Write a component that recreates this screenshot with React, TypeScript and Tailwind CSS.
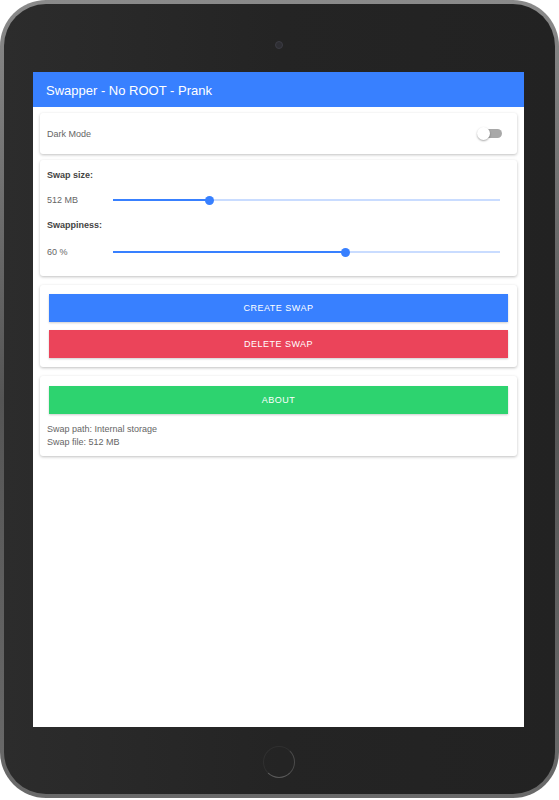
import { useState } from 'react';

function Slider({ value }: { value: number }) {
  return (
    <div className="relative flex-1 h-[10px] flex items-center">
      <div className="w-full h-[2px] bg-[#c9dcff]" />
      <div
        className="absolute left-0 h-[2px] bg-[#3880ff]"
        style={{ width: `${value * 100}%` }}
      />
      <div
        className="absolute w-[9px] h-[9px] -ml-[4.5px] rounded-full bg-[#3880ff]"
        style={{ left: `${value * 100}%` }}
      />
    </div>
  );
}

function Card({ children, className = '' }: { children: React.ReactNode; className?: string }) {
  return (
    <div
      className={`mx-[7px] bg-white rounded-[3px] shadow-[0_1px_3px_rgba(0,0,0,0.25)] ${className}`}
    >
      {children}
    </div>
  );
}

export default function App() {
  const [dark, setDark] = useState(false);
  return (
    <div className="w-[559px] h-[800px] bg-white font-['Liberation_Sans',Arial,sans-serif]">
      {/* Tablet bezel */}
      <div className="w-[559px] h-[798px] rounded-[46px] bg-gradient-to-b from-[#8a8a8a] via-[#555] to-[#6a6a6a] p-[4px]">
        <div className="w-full h-full rounded-[42px] bg-gradient-to-r from-[#2c2c2c] via-[#242424] to-[#222] flex flex-col pl-[29px] pr-[31px]">
          {/* Camera */}
          <div className="h-[68px] flex justify-center pt-[37px]">
            <div className="w-[8px] h-[8px] rounded-full bg-[#2e2e33] border border-[#3c3c44]" />
          </div>

          {/* Screen */}
          <div className="h-[655px] bg-white flex flex-col">
            <div className="h-[35px] bg-[#3880ff] flex items-center px-[13px] pt-[2px] text-white text-[13px]">
              Swapper - No ROOT - Prank
            </div>

            <div className="flex flex-col gap-[6px] pt-[6px]">
              <Card className="h-[41px] flex items-center justify-between pl-[7px] pr-[15px]">
                <span className="pt-[2px] text-[9px] text-[#666]">Dark Mode</span>
                <button
                  onClick={() => setDark(!dark)}
                  className="relative w-[18px] h-[9px] rounded-full bg-[#a8a8a8]"
                >
                  <span className="absolute -left-[7px] -top-[2px] w-[13px] h-[13px] rounded-full bg-white shadow-[0_1px_2px_rgba(0,0,0,0.35)]" />
                </button>
              </Card>

              <Card className="h-[116px] pl-[7px] pr-[17px] pt-[8px]">
                <div className="h-[14px] flex items-center pt-[2px] text-[9px] font-bold text-[#444]">Swap size:</div>
                <div className="h-[24px] flex items-center mt-[6px]">
                  <span className="w-[66px] pt-[2px] text-[9px] text-[#666]">512 MB</span>
                  <Slider value={0.25} />
                </div>
                <div className="h-[14px] flex items-center pt-[2px] text-[9px] font-bold text-[#444] mt-[6px]">Swappiness:</div>
                <div className="h-[24px] flex items-center mt-[8px]">
                  <span className="w-[66px] pt-[2px] text-[9px] text-[#666]">60 %</span>
                  <Slider value={0.6} />
                </div>
              </Card>

              <Card className="mt-[3px] px-[9px] py-[9px] flex flex-col gap-[8px]">
                <button className="h-[28px] pt-[2px] bg-[#3880ff] text-white text-[9px] tracking-[0.5px] shadow-[0_1px_2px_rgba(0,0,0,0.2)]">
                  CREATE SWAP
                </button>
                <button className="h-[28px] pt-[2px] bg-[#eb445a] text-white text-[9px] tracking-[0.5px] shadow-[0_1px_2px_rgba(0,0,0,0.2)]">
                  DELETE SWAP
                </button>
              </Card>

              <Card className="mt-[3px] px-[9px] pt-[10px] pb-[7px]">
                <button className="w-full h-[28px] pt-[2px] bg-[#2dd36f] text-white text-[9px] tracking-[0.5px] shadow-[0_1px_2px_rgba(0,0,0,0.2)]">
                  ABOUT
                </button>
                <div className="mt-[9px] -ml-[2px] text-[9px] text-[#666] leading-[13px]">
                  <div>Swap path: Internal storage</div>
                  <div>Swap file: 512 MB</div>
                </div>
              </Card>
            </div>
          </div>

          {/* Home button */}
          <div className="flex-1 flex justify-center pt-[19px]">
            <div className="w-[32px] h-[32px] rounded-full border-[1.5px] border-[#303030] border-b-[#5a5a5a] border-r-[#4a4a4a]" />
          </div>
        </div>
      </div>
    </div>
  );
}
